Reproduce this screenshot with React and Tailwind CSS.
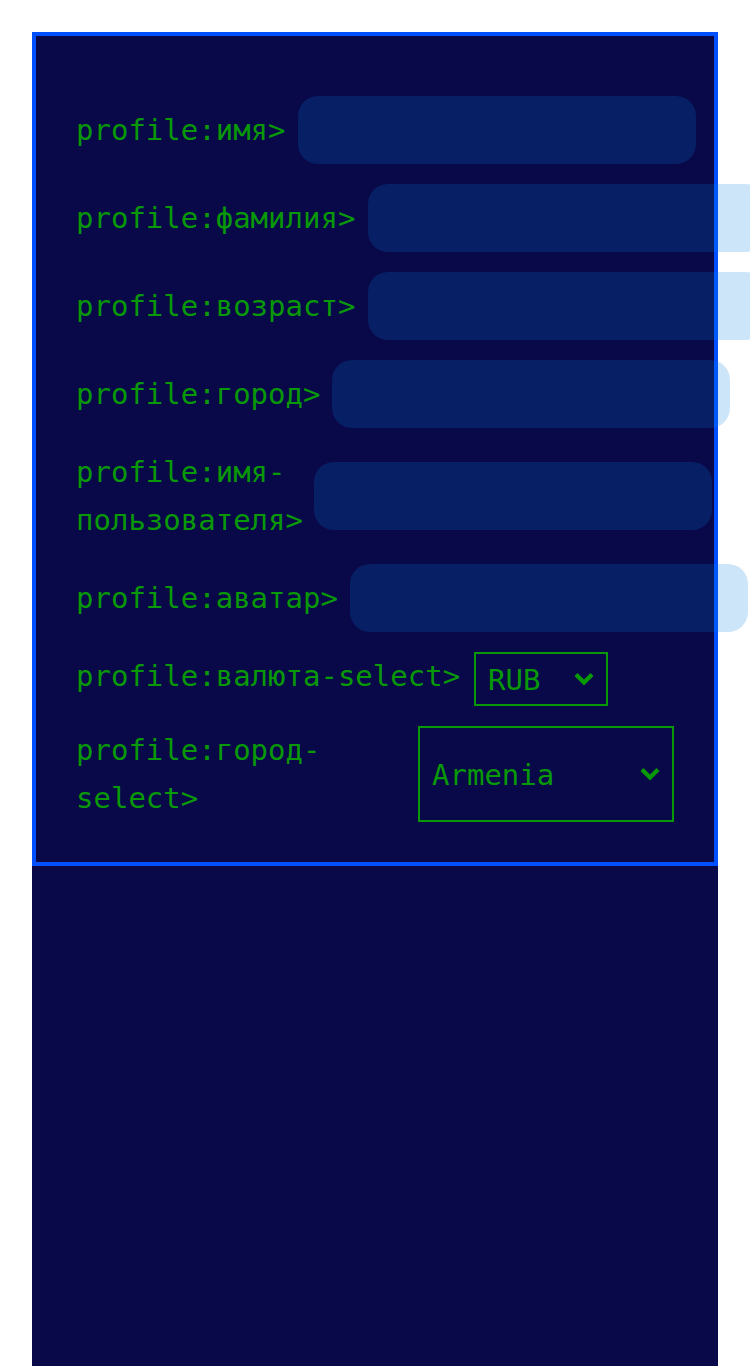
import React from "react";

const fields = [
  { id: "name", label: "profile:имя>", width: "w-[212px]" },
  { id: "surname", label: "profile:фамилия>", width: "w-[282px]" },
  { id: "age", label: "profile:возраст>", width: "w-[282px]" },
  { id: "city", label: "profile:город>", width: "w-[246px]" },
  { id: "username", label: "profile:имя-пользователя>", width: "w-[228px]" },
  { id: "avatar", label: "profile:аватар>", width: "w-[264px]" },
];

function TextField({ id, label, width }) {
  return (
    <div className="flex items-center gap-[10px]">
      <label htmlFor={id} className={`shrink-0 ${width}`}>
        {label}
      </label>
      <input
        id={id}
        type="text"
        className="h-[68px] w-[398px] shrink-0 rounded-[20px] bg-[#007ddc]/20 px-5 outline-none"
      />
    </div>
  );
}

function SelectField({ id, options, className }) {
  return (
    <div className={`relative shrink-0 ${className}`}>
      <select
        id={id}
        className="h-full w-full appearance-none border-2 border-[#089808] bg-transparent pt-[2px] pl-3 outline-none"
      >
        {options.map((option) => (
          <option key={option} className="bg-[#090848]">
            {option}
          </option>
        ))}
      </select>
      <svg
        viewBox="0 0 20 14"
        className="pointer-events-none absolute top-1/2 right-[14px] h-[14px] w-5 -translate-y-1/2"
        fill="none"
        stroke="currentColor"
        strokeWidth="4.4"
        aria-hidden="true"
      >
        <path d="M2 2.5 10 10.5 18 2.5" />
      </svg>
    </div>
  );
}

export default function App() {
  return (
    <div className="flex min-h-screen flex-col overflow-x-hidden bg-white px-8 pt-8">
      <main className="flex-1 bg-[#090848] font-[Consolas,'DejaVu_Sans_Mono',monospace] text-[29px] leading-[48px] text-[#089808]">
        <form className="flex flex-col gap-5 border-4 border-[#0050ff] px-10 pt-[60px] pb-10">
          {fields.map((field) => (
            <TextField key={field.id} {...field} />
          ))}
          <div className="flex items-start gap-[10px]">
            <label htmlFor="currency" className="w-[388px] shrink-0">
              profile:валюта-select&gt;
            </label>
            <SelectField
              id="currency"
              options={["RUB", "USD", "EUR"]}
              className="h-[54px] w-[134px]"
            />
          </div>
          <div className="flex items-stretch gap-[10px]">
            <label htmlFor="country" className="flex-1">
              profile:город-select&gt;
            </label>
            <SelectField
              id="country"
              options={["Armenia", "Belarus", "Georgia"]}
              className="w-64"
            />
          </div>
        </form>
      </main>
    </div>
  );
}
